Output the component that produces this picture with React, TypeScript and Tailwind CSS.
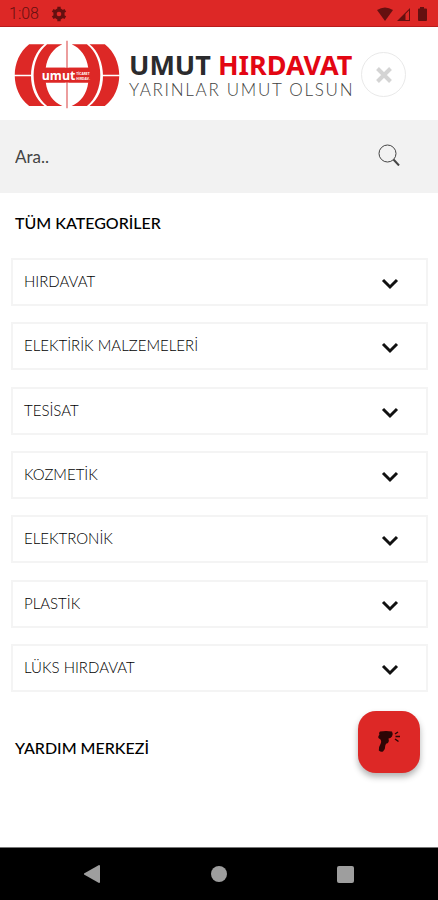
import { useState } from "react";

const categories = [
  "HIRDAVAT",
  "ELEKTİRİK MALZEMELERİ",
  "TESİSAT",
  "KOZMETİK",
  "ELEKTRONİK",
  "PLASTİK",
  "LÜKS HIRDAVAT",
];

function StatusBar() {
  return (
    <div className="flex h-[27px] shrink-0 items-center border-b border-[#b91c1c] bg-[#dd2826] pt-[2px] pr-2 pl-[9px] text-[#651010]">
      <span className="font-['Roboto',sans-serif] text-[16px] leading-5 font-light">1:08</span>
      <svg viewBox="0 0 24 24" className="ml-3 size-4" fill="none" stroke="currentColor">
        <circle cx="12" cy="12" r="6" strokeWidth="5" />
        <path
          d="M12 1V5M12 19V23M2.500 6.500 6 8.500M18 15.500 21.500 17.500M2.500 17.500 6 15.500M18 8.500 21.500 6.500"
          strokeWidth="5"
        />
      </svg>
      <div className="ml-auto flex items-center gap-1">
        <svg viewBox="0 0 16 14" className="h-[14px] w-4" fill="currentColor">
          <path d="M0 3Q8-2 16 3L8 14z" />
        </svg>
        <svg viewBox="0 0 13 14" className="h-[14px] w-[13px]" fill="currentColor">
          <path d="M13 1V14H0zM12 3.500 8.500 7V13H12z" fillRule="evenodd" />
        </svg>
        <svg viewBox="0 0 16 14" className="h-[14px] w-4" fill="currentColor">
          <path d="M6 0h4v1.500h2q1 0 1 1V13q0 1-1 1H5q-1 0-1-1V2.500q0-1 1-1h1z" />
        </svg>
      </div>
    </div>
  );
}

function LogoMark() {
  return (
    <svg viewBox="40 30 324 208" className="h-[69px] w-[108px] shrink-0">
      <g fill="#dd2826">
        <path d="M88 43H134C82 84 78 188 134 229H88C30 184 30 88 88 43z" />
        <path d="M316 43H270C322 84 326 188 270 229H316C374 184 374 88 316 43z" />
        <path d="M142 43H188C160 55 142 82 138 114H266C262 82 244 55 216 43H262C316 84 316 188 262 229H216C244 217 262 191 266 158H138C142 191 160 217 188 229H142C88 186 88 86 142 43z" />
      </g>
      <path d="M42 137H94M310 137H362" stroke="#fff" strokeWidth="4" />
      <path d="M202 32V236" stroke="#fff" strokeWidth="10" />
      <path d="M202 32V236" stroke="#e88a8a" strokeWidth="5" />
      <path d="M138 114H266V158H138z" fill="#dd2826" />
      <text x="126" y="151" fill="#fff" className="font-['Open_Sans',sans-serif] text-[37px] font-bold">
        umut
      </text>
      <text x="230" y="135" fill="#fff" className="font-['Open_Sans',sans-serif] text-[10px] font-bold">
        TİCARET
      </text>
      <text x="230" y="151" fill="#fff" className="font-['Open_Sans',sans-serif] text-[10px] font-bold">
        HIRDAV.
      </text>
    </svg>
  );
}

function Header() {
  return (
    <header className="flex h-[93px] shrink-0 items-center bg-white pt-[2px] pl-[13px]">
      <a href="#" className="flex items-center gap-2">
        <LogoMark />
        <div className="pt-1 whitespace-nowrap">
          <div className="font-['Noto_Sans','Open_Sans',sans-serif] text-[27px] leading-[26px] font-bold text-[#2b2b2d]">
            UMUT <span className="text-[#e30613]">HIRDAVAT</span>
          </div>
          <div className="text-[17px] leading-6 font-light tracking-widest text-[#3f3f41]">
            YARINLAR UMUT OLSUN
          </div>
        </div>
      </a>
      <button
        aria-label="Kapat"
        className="mr-8 ml-auto flex size-[45px] shrink-0 items-center justify-center rounded-full border border-[#e9e9e9] bg-white"
      >
        <svg viewBox="0 0 16 16" className="size-4" stroke="#d4d4d4" strokeWidth="4">
          <path d="M1.500 1.500 14.500 14.500M14.500 1.500 1.500 14.500" />
        </svg>
      </button>
    </header>
  );
}

function SearchBar() {
  return (
    <form className="flex h-[73px] shrink-0 items-center bg-[#f2f2f2] pr-[38px] pl-[15px]">
      <input
        type="text"
        aria-label="Ara"
        placeholder="Ara.."
        className="min-w-0 flex-1 bg-transparent text-[17px] leading-6 text-[#333] outline-none placeholder:text-[#444]"
      />
      <button type="button" aria-label="Ara" className="pb-1">
        <svg viewBox="0 0 22 22" className="size-[22px]" fill="none" stroke="#444">
          <circle cx="9.500" cy="9.500" r="8.500" />
          <path d="M15.500 15.500 21 21.500" strokeWidth="2" />
        </svg>
      </button>
    </form>
  );
}

function ScanIcon() {
  return (
    <svg viewBox="0 0 24 24" className="size-6" fill="#2d0505">
      <path d="M3 1.500Q9 .5 15 1.500Q16.500 4 15 6.500Q13.500 8.500 11.500 8.500Q12.500 11 11 13Q8.500 13 8.300 15.500Q8.500 19 6 21.500Q4 22.500 1.800 20.500Q1.500 17 3.500 14Q5 11 3 9Q.5 8 1.500 6Q3 5 2 3z" />
      <path d="M18 4 21 2M18.500 6.500H23M18 9 21.500 11.500" stroke="#2d0505" strokeWidth="1.500" />
    </svg>
  );
}

function NavBar() {
  return (
    <nav className="grid h-[53px] shrink-0 grid-cols-[1fr_auto_1fr] items-center border-t border-[#777] bg-black">
      <button aria-label="Geri" className="mr-[110px] justify-self-end">
        <svg viewBox="0 0 18 18" className="size-[18px]" fill="#9e9e9e">
          <path d="M1 8.500 16 0Q17 0 17 1V17Q17 18 16 18L1 9.500z" />
        </svg>
      </button>
      <button aria-label="Ana ekran" className="size-4 rounded-full bg-[#9e9e9e]" />
      <button aria-label="Son uygulamalar" className="ml-[110px] size-[17px] rounded-xs bg-[#9e9e9e]" />
    </nav>
  );
}

export default function App() {
  const [open, setOpen] = useState("");

  return (
    <div className="flex min-h-screen flex-col bg-white font-['Lato',sans-serif]">
      <StatusBar />
      <Header />
      <SearchBar />

      <main className="flex flex-1 flex-col">
        <h2 className="flex h-[65px] items-center px-[15px] pb-[6px] text-[16px] leading-6 font-medium text-black">
          TÜM KATEGORİLER
        </h2>

        {/* Categories */}
        <ul className="flex flex-1 flex-col justify-between gap-4 pr-[10px] pl-[11px]">
          {categories.map((name) => (
            <li key={name}>
              <button
                aria-expanded={open === name}
                onClick={() => setOpen(open === name ? "" : name)}
                className="flex h-12 w-full items-center justify-between border-2 border-[#f4f4f4] pr-[27px] pb-[2px] pl-[11px] text-left text-[15px] leading-6 font-light text-black"
              >
                {name}
                <svg viewBox="0 0 18 12" className="mt-[6px] h-3 w-[18px]" fill="none" stroke="#111" strokeWidth="3">
                  <path d="M2 2 9 9 16 2" />
                </svg>
              </button>
            </li>
          ))}
        </ul>

        {/* Help */}
        <div className="flex h-[155px] items-start justify-between pt-[19px] pr-[18px] pl-[15px]">
          <h2 className="pt-[25px] text-[16px] leading-6 font-medium text-black">YARDIM MERKEZİ</h2>
          <button
            aria-label="Barkod tara"
            className="flex size-[62px] items-center justify-center rounded-[18px] bg-[#dd2826] shadow-[0_4px_6px_rgba(0,0,0,0.3)]"
          >
            <ScanIcon />
          </button>
        </div>
      </main>

      <NavBar />
    </div>
  );
}
